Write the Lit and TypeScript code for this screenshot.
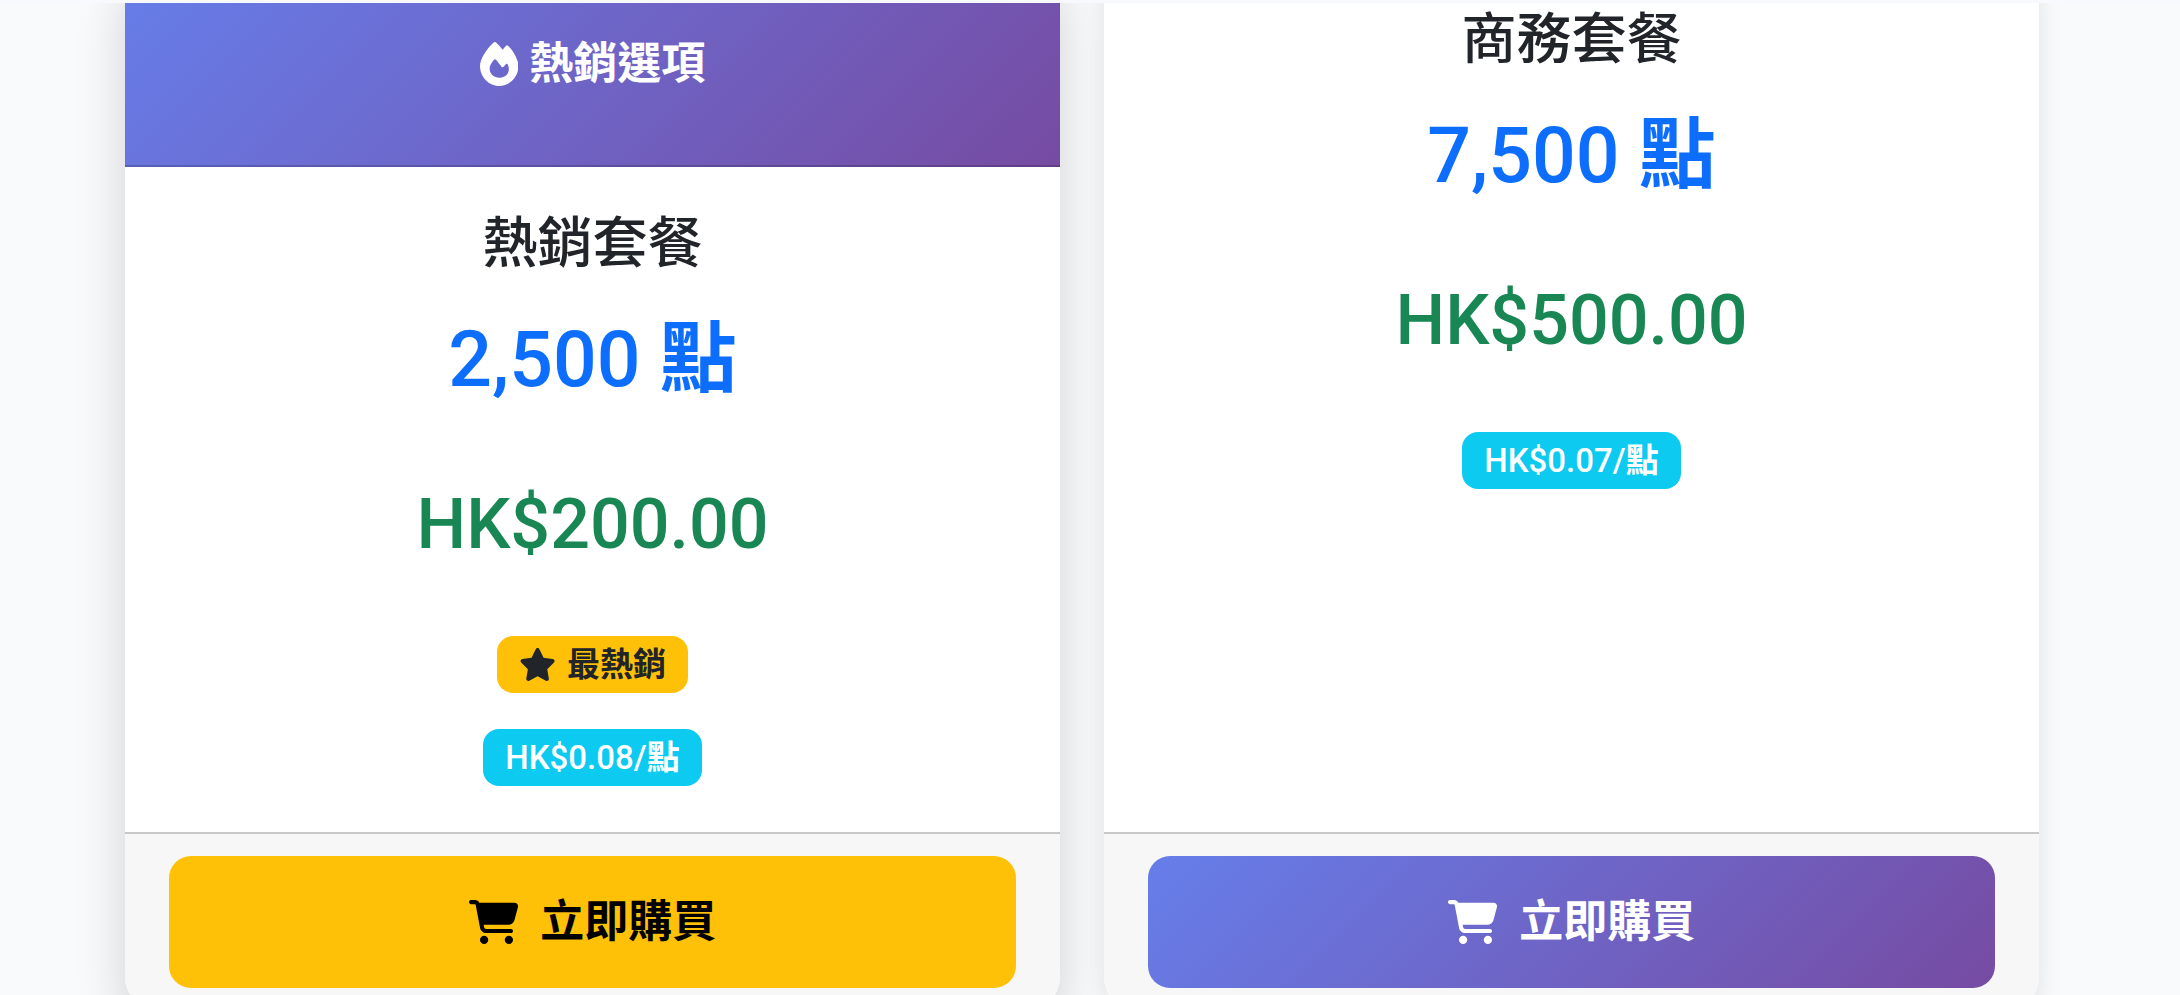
import { LitElement, html, svg, css, nothing } from "lit";
import { customElement, property } from "lit/decorators.js";

interface Plan {
  name: string;
  points: string;
  price: string;
  rate: string;
  hot: boolean;
}

const PLANS: Plan[] = [
  { name: "熱銷套餐", points: "2,500", price: "HK$200.00", rate: "HK$0.08", hot: true },
  { name: "商務套餐", points: "7,500", price: "HK$500.00", rate: "HK$0.07", hot: false },
];

const fire = svg`<path d="M159.3 5.4c7.8-7.3 19.9-7.2 27.7 .1c27.6 25.9 53.5 53.8 77.7 84c11-14.4 23.5-30.1 37-42.9c7.9-7.4 20.1-7.4 28 .1c34.6 33 63.9 76.6 84.5 118c20.3 40.8 33.8 82.5 33.8 111.9C448 404.2 348.2 512 224 512C98.4 512 0 404.1 0 276.5c0-38.4 17.8-85.3 45.4-131.7C73.3 97.7 112.7 48.6 159.3 5.4zM225.7 416c25.3 0 47.7-7 68.8-21c42.1-29.4 53.4-88.2 28.1-134.4c-4.5-9-16-9.6-22.5-2l-25.2 29.3c-6.6 7.6-18.5 7.4-24.7-.5c-16.5-21-46-58.5-62.8-79.8c-6.3-8-18.3-8.1-24.7-.1c-33.8 42.5-50.8 69.3-50.8 99.4C112 375.4 162.6 416 225.7 416z"/>`;
const star = svg`<path d="M316.9 18C311.6 7 300.4 0 288.1 0s-23.4 7-28.8 18L195 150.3 51.4 171.5c-12 1.8-22 10.2-25.7 21.7s-.7 24.2 7.9 32.7L137.8 329 113.2 474.7c-2 12 3 24.2 12.9 31.3s23 8 33.8 2.3l128.3-68.5 128.3 68.5c10.8 5.7 23.9 4.9 33.8-2.3s14.9-19.3 12.9-31.3L438.5 329 542.7 225.9c8.6-8.5 11.7-21.2 7.9-32.7s-13.7-19.9-25.7-21.7L381.2 150.3 316.9 18z"/>`;
const cart = svg`<path d="M0 24C0 10.7 10.7 0 24 0H69.5c22 0 41.5 12.8 50.6 32h411c26.3 0 45.5 25 38.6 50.4l-41 152.3c-8.5 31.4-37 53.3-69.5 53.3H170.7l5.4 28.5c2.2 11.3 12.1 19.5 23.6 19.5H488c13.3 0 24 10.7 24 24s-10.7 24-24 24H199.7c-34.6 0-64.3-24.6-70.7-58.5L77.4 54.5c-.7-3.8-4-6.5-7.9-6.5H24C10.7 48 0 37.3 0 24zM128 464a48 48 0 1 1 96 0 48 48 0 1 1 -96 0zm336-48a48 48 0 1 1 0 96 48 48 0 1 1 0-96z"/>`;

@customElement("plan-card")
class PlanCard extends LitElement {
  @property({ attribute: false }) plan!: Plan;

  static styles = css`
    :host {
      display: flex;
      min-width: 0;
    }
    .card {
      flex: 1;
      display: flex;
      flex-direction: column;
      background: #fff;
      border-radius: 33px;
      overflow: hidden;
      text-align: center;
      box-shadow: 0 8px 24px rgba(0, 0, 0, 0.1);
    }
    .card.hot {
      box-shadow: 0 20px 50px rgba(0, 0, 0, 0.16);
    }
    .icon {
      height: 1em;
      fill: currentColor;
      flex: none;
    }
    .header {
      height: 202px;
      box-sizing: content-box;
      display: flex;
      justify-content: center;
      align-items: center;
      gap: 11px;
      border-bottom: 2px solid rgba(0, 0, 0, 0.176);
      background: linear-gradient(135deg, #667eea 0%, #764ba2 100%) border-box;
      color: #fff;
      font-size: 44px;
      line-height: 66px;
      font-weight: 700;
    }
    .body {
      flex: 1;
      display: flex;
      flex-direction: column;
      align-items: center;
      padding: 44px 44px 46px;
    }
    .name,
    .points,
    .price {
      margin: 0;
      font-weight: 500;
    }
    .name {
      font-size: 55px;
      line-height: 64px;
      margin-bottom: 36px;
    }
    .points {
      font-size: 77px;
      line-height: 98px;
      margin-bottom: 71px;
      color: #0d6efd;
    }
    .price {
      font-size: 70px;
      line-height: 88px;
      margin-bottom: 68px;
      color: #198754;
    }
    .unit {
      font-weight: 700;
    }
    .badge {
      display: flex;
      align-items: center;
      gap: 11px;
      padding: 12px 22px;
      border-radius: 16px;
      font-size: 33px;
      line-height: 33px;
      font-weight: 500;
      color: #fff;
      background: #0dcaf0;
    }
    .badge.best {
      margin-bottom: 36px;
      color: #212529;
      background: #ffc107;
      font-weight: 700;
    }
    .footer {
      border-top: 2px solid #c8c8c8;
      background: #f7f7f7;
      padding: 22px 44px;
    }
    .buy {
      width: 100%;
      display: flex;
      justify-content: center;
      align-items: center;
      gap: 22px;
      padding: 33px;
      border: 0;
      border-radius: 22px;
      font-family: inherit;
      font-size: 44px;
      line-height: 66px;
      font-weight: 600;
      color: #fff;
      background: linear-gradient(135deg, #667eea 0%, #764ba2 100%);
      cursor: pointer;
    }
    .hot .buy {
      color: #000;
      background: #ffc107;
    }
  `;

  render() {
    const p = this.plan;
    return html`
      <article class="card ${p.hot ? "hot" : ""}">
        ${p.hot
          ? html`<header class="header">
              <svg class="icon" viewBox="0 0 448 512" aria-hidden="true">${fire}</svg>
              <span>熱銷選項</span>
            </header>`
          : nothing}
        <div class="body">
          <h2 class="name">${p.name}</h2>
          <p class="points">${p.points} <span class="unit">點</span></p>
          <p class="price">${p.price}</p>
          ${p.hot
            ? html`<span class="badge best">
                <svg class="icon" viewBox="0 0 576 512" aria-hidden="true">${star}</svg>
                <span>最熱銷</span>
              </span>`
            : nothing}
          <span class="badge"><span>${p.rate}/<span class="unit">點</span></span></span>
        </div>
        <footer class="footer">
          <button class="buy" type="button">
            <svg class="icon" viewBox="0 0 576 512" aria-hidden="true">${cart}</svg>
            <span>立即購買</span>
          </button>
        </footer>
      </article>
    `;
  }
}

@customElement("app-root")
class AppRoot extends LitElement {
  static styles = css`
    :host {
      display: block;
      height: 100vh;
      overflow: hidden;
      background: #f8fafc;
      color: #212529;
      font-family: Roboto, "Noto Sans CJK TC", sans-serif;
    }
    .topbar {
      position: relative;
      z-index: 1;
      height: 3px;
      background: #f8f8ff;
    }
    .plans {
      margin-top: -40px;
      padding: 0 141px 44px 125px;
      display: grid;
      grid-template-columns: repeat(2, minmax(0, 1fr));
      gap: 44px;
    }
  `;

  render() {
    return html`
      <div class="topbar"></div>
      <main class="plans">${PLANS.map((p) => html`<plan-card .plan=${p}></plan-card>`)}</main>
    `;
  }
}
